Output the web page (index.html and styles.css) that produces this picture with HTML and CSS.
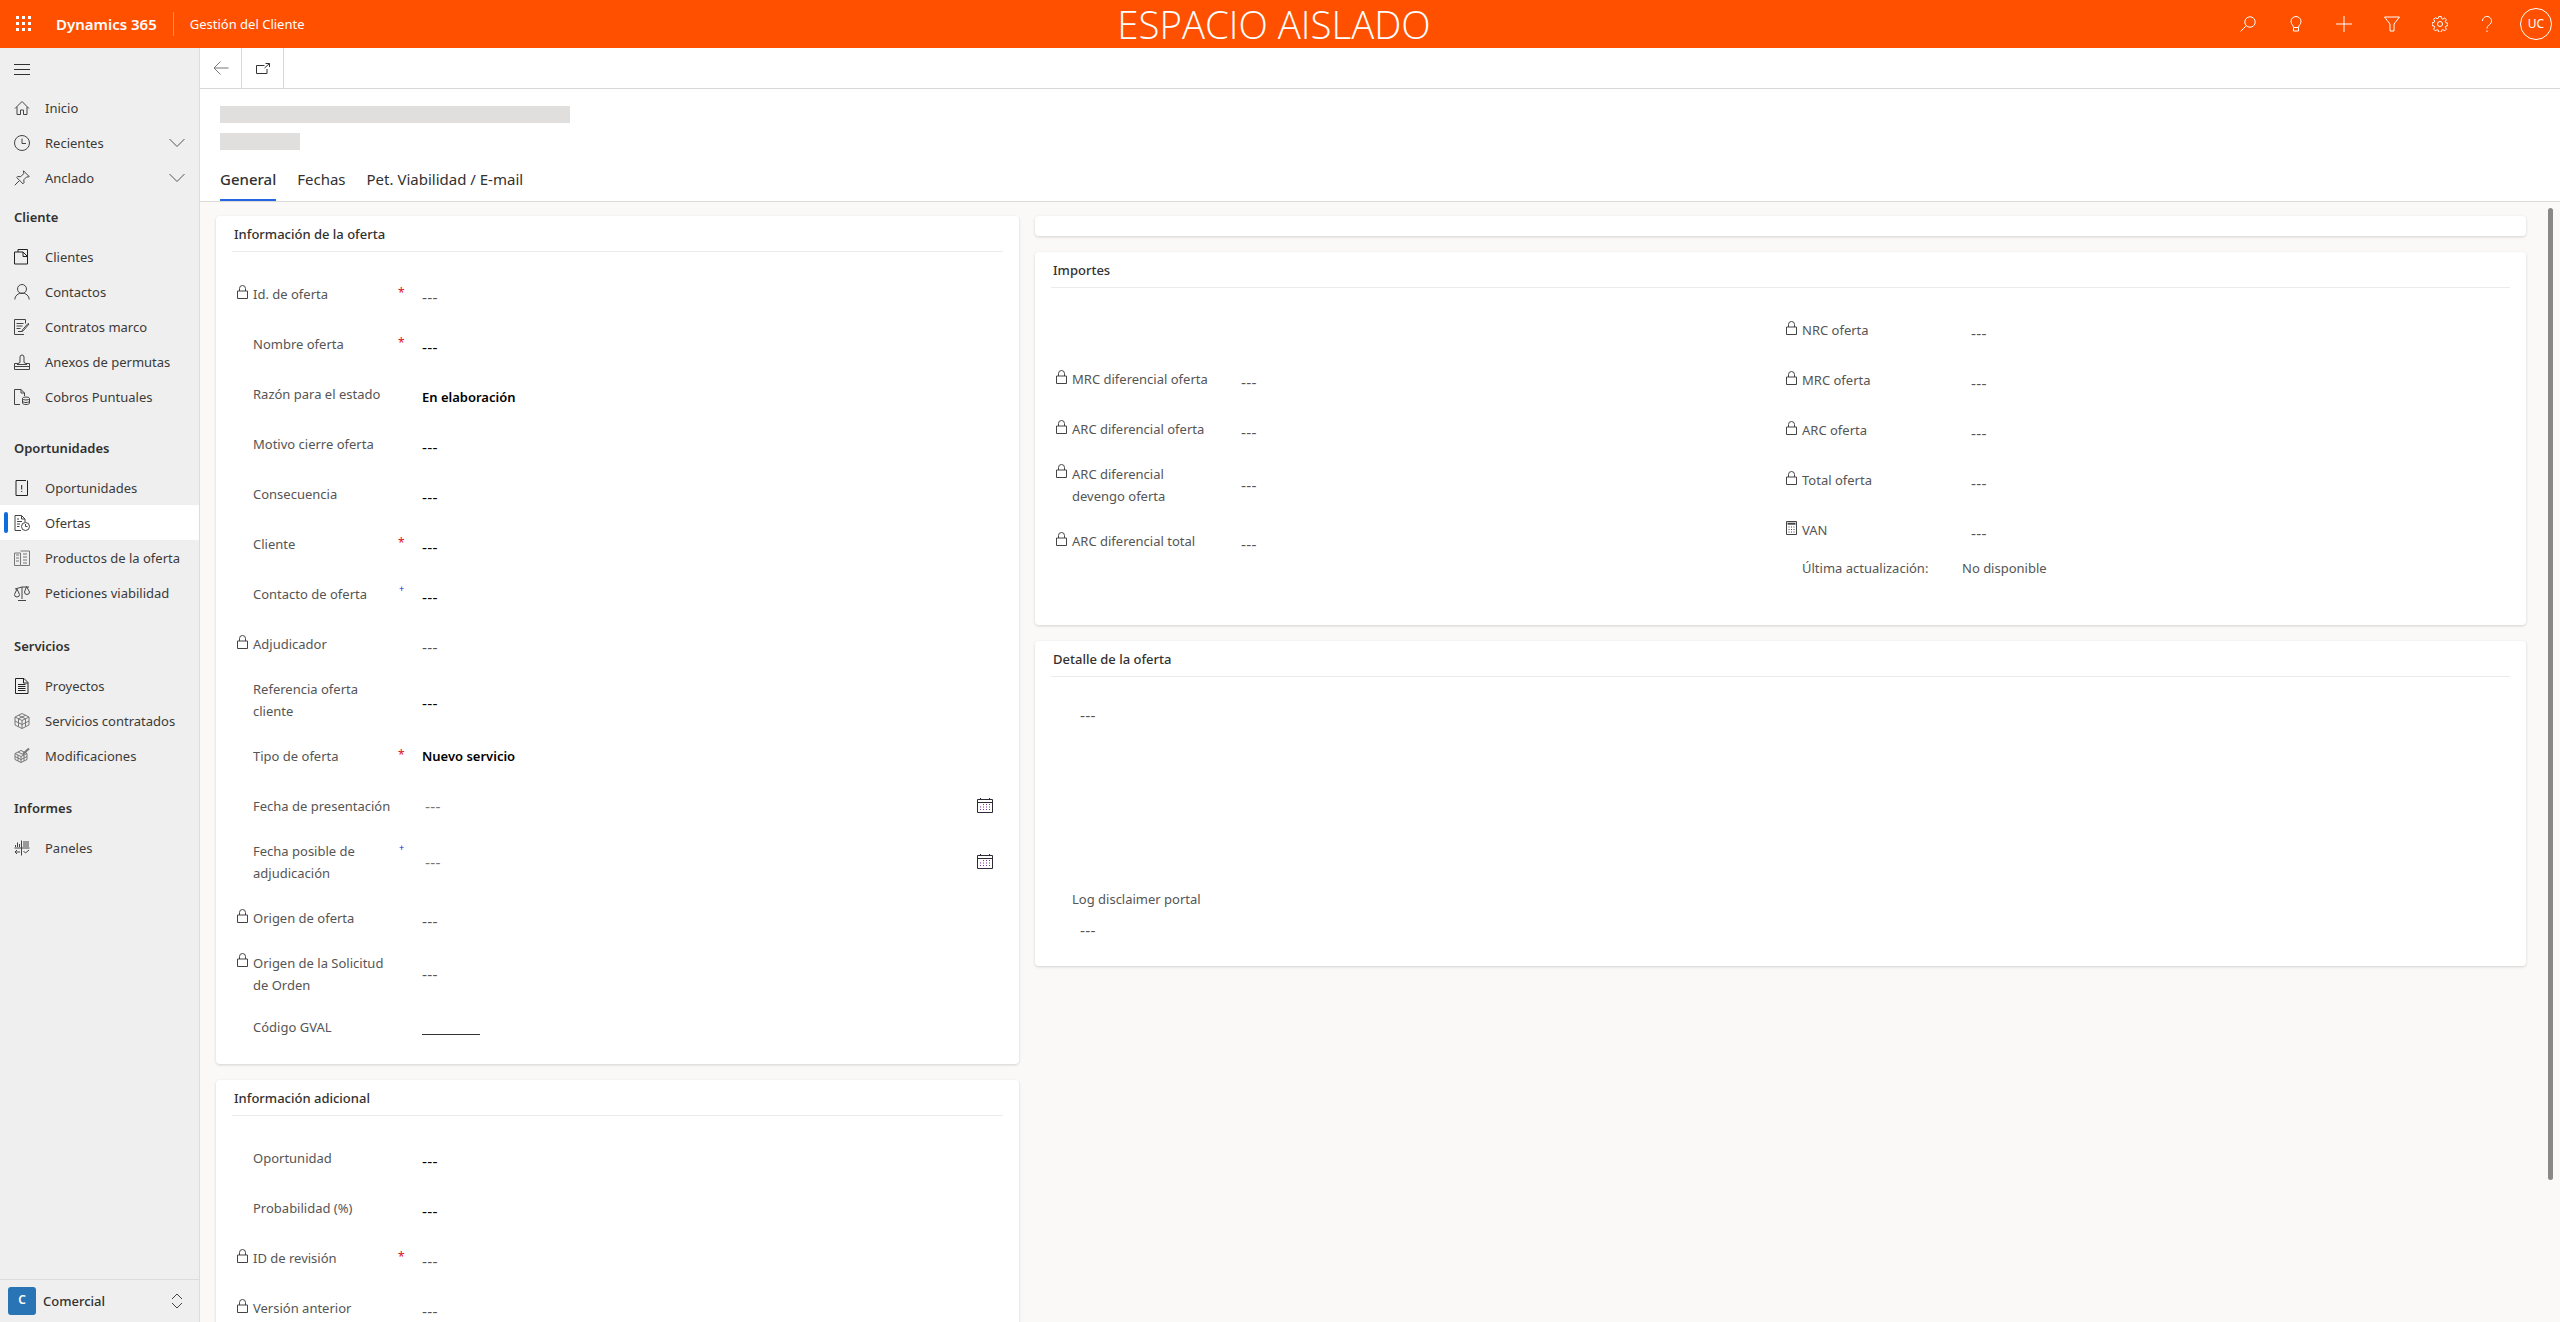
FILE: index.html
```html
<!doctype html>
<html lang="es">
	<head>
		<meta charset="utf-8">
		<title>Gestión del Cliente</title>
		<link rel="stylesheet" href="styles.css">
	</head>
	<body>
		<svg class="sprite" xmlns="http://www.w3.org/2000/svg">
			<symbol id="i-lock" viewBox="0 0 11 14"><path d="M2.5 6V3.5a3 3 0 0 1 6 0V6M.5 6h10v7.5H.5z"/></symbol>
			<symbol id="i-home" viewBox="0 0 16 16"><path d="M1 8.5 8 1.5l7 7M3 7v7.5h3.5V10h3v4.5H13V7"/></symbol>
			<symbol id="i-clock" viewBox="0 0 16 16"><circle cx="8" cy="8" r="7.5"/><path d="M8 3.5V8.5H12"/></symbol>
			<symbol id="i-pin" viewBox="0 0 16 16"><path d="M9.5 .8 15.2 6.5l-1.1.5-1.3-.2-3 3 .2 3-1 1-6.3-6.3 1-1 3 .2 3-3-.2-1.3zM5 11 .8 15.2"/></symbol>
			<symbol id="i-chev" viewBox="0 0 16 10"><path d="M.5 1 8 8.5 15.5 1"/></symbol>
			<symbol id="i-updown" viewBox="0 0 12 16"><path d="M1 6 6 1l5 5M1 10l5 5 5-5"/></symbol>
			<symbol id="i-account" viewBox="0 0 16 16"><path d="M4 3V.5h9.5V15M.5 3H9l4.5 4.5V15H.5zM9 3v4.5h4.5"/></symbol>
			<symbol id="i-person" viewBox="0 0 16 16"><circle cx="8" cy="5" r="4.5"/><path d="M.8 15.5a7.2 6.5 0 0 1 14.400 0"/></symbol>
			<symbol id="i-contract" viewBox="0 0 16 16"><path d="M10 15.5H.5V.5h11v4M2.500 4.500h7M2.500 7h6M2.500 9.500h4M4 12.500h4M15 5l-5.500 6.500-1.500 1 .5-1.700L14 4.500z"/></symbol>
			<symbol id="i-stamp" viewBox="0 0 16 16"><path d="M.5 15.500h15v-6h-3.500l-2-1V3a2 2 0 0 0-4 0v5.500l-2 1H.5zM.5 12.500h15M3 10.500h10"/></symbol>
			<symbol id="i-bill" viewBox="0 0 16 16"><path d="M6 15.500H.5V.5h6.500l3.500 3.500v3M7 .5V4h3.500"/><ellipse cx="12" cy="9.500" rx="3.500" ry="1.500"/><path d="M8.500 9.500v4.500c0 2 7 2 7 0V9.500M8.500 12c0 2 7 2 7 0"/></symbol>
			<symbol id="i-opp" viewBox="0 0 16 16"><path d="M12 .5H2v15h11.500V2.500M7.700 5v4.500M7.700 11v1M13.500 .5v4"/></symbol>
			<symbol id="i-quote" viewBox="0 0 16 16"><path d="M7 15.500H1V.5h6.500L11 4v3M7.500 .5V4H11M3 4h2M3 6.500h5M3 9h3M3 11.500h2.500"/><circle cx="11.500" cy="11.500" r="4"/><path d="M11.500 9v2.500h2"/></symbol>
			<symbol id="i-products" viewBox="0 0 16 16"><path d="M.5 3h6v12.500h-6zM6.500 1h9v14.500h-9M2 5h3M2 8h3M2 11h3M9 4h4M9 7h4M9 10h4M9 13h4"/></symbol>
			<symbol id="i-scale" viewBox="0 0 16 16"><path d="M8 2v12M4 15.500h8M1 4l7-2 7 0M3 4 .5 9.500a2.500 2.500 0 0 0 5 0zM12.500 1.500 10.500 7a2.500 2.500 0 0 0 5 0z"/></symbol>
			<symbol id="i-doc" viewBox="0 0 16 16"><path d="M1.500.5h8.500l4 4v11H1.500zM9.500.5V5H14M4 6.500h7.500M4 8.500h7.500M4 10.500h7.500M4 12.500h7.500"/></symbol>
			<symbol id="i-cube" viewBox="0 0 16 16"><path d="M8 .5 15 4v8l-7 3.500L1 12V4zM1 4l7 3.500L15 4M8 7.500v8M4.500 2.300l7 3.500M11.500 2.300l-7 3.500M1 8l7 3.500L15 8M4.500 5.800v8M11.500 5.800v8"/></symbol>
			<symbol id="i-cubeedit" viewBox="0 0 16 16"><path d="M7 2.500 13 5.500v6l-6 3-6-3v-6zM1 5.500l6 3 6-3M7 8.500v6M4 4l6 3M1 8.500l6 3 6-3M4 7v6M10 7v6"/><path class="thick" d="M9 6 15 .5"/></symbol>
			<symbol id="i-panel" viewBox="0 0 16 16"><path d="M7.500 .5v15M.5 8h15M1.500 7V5M3.500 7V2.500M5.500 7V4M9 2h6M9 4h6M9 6h6M1 12h5M1 12l2-2M1 12l2 2M9.500 11l2 2 3.500-3"/></symbol>
			<symbol id="i-calc" viewBox="0 0 11 14"><path d="M.5.5h10v13H.5zM2.500 6h1M5 6h1M7.500 6h1M2.500 8.500h1M5 8.500h1M7.500 8.500h1M2.500 11h1M5 11h1M7.500 11h1"/><path class="thick" d="M1.500 2.700h8"/></symbol>
			<symbol id="i-cal" viewBox="0 0 16 15"><path class="cal-frame" d="M.5 1.500h15v13H.5zM.5 4.500h15M3.500 0v2M12.500 0v2"/><path class="cal-dots" d="M6 6.500h1M9 6.500h1M12 6.500h1M3 9h1M6 9h1M9 9h1M12 9h1M3 11.500h1M6 11.500h1M9 11.500h1M12 11.500h1"/></symbol>
		</svg>

		<div class="app">
			<header class="topbar">
				<div class="brand">
					<svg class="waffle" viewBox="0 0 16 16"><path d="M0 0h3v3H0zM6 0h3v3H6zM12 0h3v3h-3zM0 6h3v3H0zM6 6h3v3H6zM12 6h3v3h-3zM0 12h3v3H0zM6 12h3v3H6zM12 12h3v3h-3z"/></svg>
					<span class="brand-name">Dynamics 365</span>
					<span class="brand-app">Gestión del Cliente</span>
				</div>
				<div class="sandbox">ESPACIO AISLADO</div>
				<div class="top-actions">
					<svg class="top-icon" viewBox="0 0 16 16"><circle cx="10" cy="6" r="5.2"/><path d="M6.200 9.800.6 15.400"/></svg>
					<svg class="top-icon" viewBox="0 0 16 16"><path d="M5.500 11.500C5.500 9 3 8.500 3 5.500a5 5 0 0 1 10 0c0 3-2.500 3.500-2.500 6zM5.500 11.500v3.500h5v-3.500"/></svg>
					<svg class="top-icon" viewBox="0 0 16 16"><path d="M8 0v16M0 8h16"/></svg>
					<svg class="top-icon" viewBox="0 0 16 16"><path d="M.5 1h15L10 8v7H6V8z"/></svg>
					<svg class="top-icon" viewBox="0 0 16 16"><circle cx="8" cy="8" r="2.5"/><path d="M6.800.5h2.400l.4 2 1.300.6 1.800-1.100 1.700 1.700-1.100 1.800.6 1.300 2 .4v2.400l-2 .4-.6 1.300 1.100 1.800-1.700 1.700-1.800-1.100-1.300.6-.4 2H6.800l-.4-2-1.300-.6-1.800 1.100-1.700-1.700 1.100-1.800-.6-1.300-2-.4V6.800l2-.4.6-1.300-1.100-1.800 1.700-1.700 1.800 1.100 1.300-.6z"/></svg>
					<svg class="top-icon" viewBox="0 0 16 16"><path d="M3.500 5a4.500 4.500 0 1 1 7 3.700C9 9.700 8 10.500 8 12.500M8 14.500v1.500"/></svg>
					<div class="avatar">UC</div>
				</div>
			</header>

			<div class="body-wrap">
				<nav class="sidebar">
					<div class="burger"><span></span><span></span><span></span></div>
					<div class="nav-item"><svg class="ico"><use href="#i-home"/></svg>Inicio</div>
					<div class="nav-item"><svg class="ico"><use href="#i-clock"/></svg>Recientes<svg class="chev"><use href="#i-chev"/></svg></div>
					<div class="nav-item"><svg class="ico"><use href="#i-pin"/></svg>Anclado<svg class="chev"><use href="#i-chev"/></svg></div>

					<div class="nav-title nav-title-first">Cliente</div>
					<div class="nav-item"><svg class="ico dark"><use href="#i-account"/></svg>Clientes</div>
					<div class="nav-item"><svg class="ico"><use href="#i-person"/></svg>Contactos</div>
					<div class="nav-item"><svg class="ico"><use href="#i-contract"/></svg>Contratos marco</div>
					<div class="nav-item"><svg class="ico"><use href="#i-stamp"/></svg>Anexos de permutas</div>
					<div class="nav-item"><svg class="ico"><use href="#i-bill"/></svg>Cobros Puntuales</div>

					<div class="nav-title nav-title-opp">Oportunidades</div>
					<div class="nav-item"><svg class="ico dark"><use href="#i-opp"/></svg>Oportunidades</div>
					<div class="nav-item current"><svg class="ico"><use href="#i-quote"/></svg>Ofertas</div>
					<div class="nav-item"><svg class="ico grey"><use href="#i-products"/></svg>Productos de la oferta</div>
					<div class="nav-item"><svg class="ico"><use href="#i-scale"/></svg>Peticiones viabilidad</div>

					<div class="nav-title nav-title-serv">Servicios</div>
					<div class="nav-item"><svg class="ico dark"><use href="#i-doc"/></svg>Proyectos</div>
					<div class="nav-item"><svg class="ico grey"><use href="#i-cube"/></svg>Servicios contratados</div>
					<div class="nav-item"><svg class="ico grey"><use href="#i-cubeedit"/></svg>Modificaciones</div>

					<div class="nav-title">Informes</div>
					<div class="nav-item"><svg class="ico"><use href="#i-panel"/></svg>Paneles</div>

					<div class="area">
						<div class="area-badge">C</div>
						<div class="area-name">Comercial</div>
						<svg class="updown"><use href="#i-updown"/></svg>
					</div>
				</nav>

				<main class="main">
					<div class="cmdbar">
						<div class="cmd-btn cmd-back"><svg class="cmd-ico" viewBox="0 0 16 16"><path d="M15.5 8H1M7.5 1.5 1 8l6.5 6.5"/></svg></div>
						<div class="cmd-btn cmd-open"><svg class="cmd-open-ico" viewBox="0 0 14 11"><path d="M8.5 2.500H.5v8h10.500V6M9.500.5h4V4M13.500.5 8.500 5"/></svg></div>
					</div>

					<div class="record-head">
						<div class="skeleton skeleton-title"></div>
						<div class="skeleton skeleton-sub"></div>
						<div class="tabs">
							<div class="tab active">General</div>
							<div class="tab">Fechas</div>
							<div class="tab">Pet. Viabilidad / E-mail</div>
						</div>
					</div>

					<div class="content">
						<div class="col">
							<section class="card card-oferta">
								<h2 class="card-title">Información de la oferta</h2>
								<div class="rows">
									<div class="row"><svg class="lock"><use href="#i-lock"/></svg><div class="label">Id. de oferta</div><div class="req">*</div><div class="value locked">---</div></div>
									<div class="row"><div class="label">Nombre oferta</div><div class="req">*</div><div class="value">---</div></div>
									<div class="row"><div class="label">Razón para el estado</div><div class="value strong">En elaboración</div></div>
									<div class="row"><div class="label">Motivo cierre oferta</div><div class="value">---</div></div>
									<div class="row"><div class="label">Consecuencia</div><div class="value">---</div></div>
									<div class="row"><div class="label">Cliente</div><div class="req">*</div><div class="value">---</div></div>
									<div class="row"><div class="label">Contacto de oferta</div><div class="req rec">+</div><div class="value">---</div></div>
									<div class="row"><svg class="lock"><use href="#i-lock"/></svg><div class="label">Adjudicador</div><div class="value locked">---</div></div>
									<div class="row tall"><div class="label">Referencia oferta cliente</div><div class="value">---</div></div>
									<div class="row"><div class="label">Tipo de oferta</div><div class="req">*</div><div class="value strong even">Nuevo servicio</div></div>
									<div class="row"><div class="label">Fecha de presentación</div><div class="value date even"><span>---</span><svg class="cal"><use href="#i-cal"/></svg></div></div>
									<div class="row tall"><div class="label">Fecha posible de adjudicación</div><div class="req rec rec-top">+</div><div class="value date even"><span>---</span><svg class="cal"><use href="#i-cal"/></svg></div></div>
									<div class="row"><svg class="lock"><use href="#i-lock"/></svg><div class="label">Origen de oferta</div><div class="value locked">---</div></div>
									<div class="row tall"><svg class="lock lock-top"><use href="#i-lock"/></svg><div class="label">Origen de la Solicitud de Orden</div><div class="value locked even">---</div></div>
									<div class="row short"><div class="label">Código GVAL</div><div class="value"><div class="blank"></div></div></div>
								</div>
							</section>

							<section class="card">
								<h2 class="card-title">Información adicional</h2>
								<div class="rows">
									<div class="row"><div class="label">Oportunidad</div><div class="value">---</div></div>
									<div class="row"><div class="label">Probabilidad (%)</div><div class="value">---</div></div>
									<div class="row"><svg class="lock"><use href="#i-lock"/></svg><div class="label">ID de revisión</div><div class="req">*</div><div class="value locked">---</div></div>
									<div class="row"><svg class="lock"><use href="#i-lock"/></svg><div class="label">Versión anterior</div><div class="value locked">---</div></div>
								</div>
							</section>
						</div>

						<div class="col">
							<section class="card card-stub"></section>

							<section class="card card-importes">
								<h2 class="card-title">Importes</h2>
								<div class="importes">
									<div class="importes-left">
										<div class="row"><svg class="lock"><use href="#i-lock"/></svg><div class="label">MRC diferencial oferta</div><div class="value locked">---</div></div>
										<div class="row"><svg class="lock"><use href="#i-lock"/></svg><div class="label">ARC diferencial oferta</div><div class="value locked">---</div></div>
										<div class="row tall"><svg class="lock lock-top"><use href="#i-lock"/></svg><div class="label">ARC diferencial devengo oferta</div><div class="value locked even">---</div></div>
										<div class="row"><svg class="lock"><use href="#i-lock"/></svg><div class="label">ARC diferencial total</div><div class="value locked">---</div></div>
									</div>
									<div class="importes-right">
										<div class="row"><svg class="lock"><use href="#i-lock"/></svg><div class="label">NRC oferta</div><div class="value locked">---</div></div>
										<div class="row"><svg class="lock"><use href="#i-lock"/></svg><div class="label">MRC oferta</div><div class="value locked">---</div></div>
										<div class="row"><svg class="lock"><use href="#i-lock"/></svg><div class="label">ARC oferta</div><div class="value locked">---</div></div>
										<div class="row"><svg class="lock"><use href="#i-lock"/></svg><div class="label">Total oferta</div><div class="value locked">---</div></div>
										<div class="row"><svg class="lock"><use href="#i-calc"/></svg><div class="label">VAN</div><div class="value locked">---</div></div>
										<div class="updated"><span class="updated-label">Última actualización:</span><span>No disponible</span></div>
									</div>
								</div>
							</section>

							<section class="card card-detalle">
								<h2 class="card-title">Detalle de la oferta</h2>
								<div class="detail-value detail-first">---</div>
								<div class="detail-label">Log disclaimer portal</div>
								<div class="detail-value">---</div>
							</section>
						</div>

						<div class="scroll-thumb"></div>
					</div>
				</main>
			</div>
		</div>
	</body>
</html>
```

FILE: styles.css
```css
* {
	margin: 0;
	padding: 0;
	box-sizing: border-box;
}
html, body {
	height: 100%;
	overflow: hidden;
}
body {
	font-family: "Noto Sans", "Open Sans", sans-serif;
	font-size: 13px;
	color: #323130;
	background: #faf9f8;
}
svg {
	fill: none;
	stroke: currentColor;
	stroke-width: 1;
	display: block;
	flex: none;
}
.sprite {
	display: none;
}
.thick {
	stroke-width: 2;
}
.app {
	display: flex;
	flex-direction: column;
	height: 100%;
}

/* top bar */
.topbar {
	display: grid;
	grid-template-columns: 1fr auto 1fr;
	align-items: center;
	height: 48px;
	flex: none;
	background: #ff5000;
	color: #fff;
}
.brand {
	display: flex;
	align-items: center;
}
.waffle {
	width: 16px;
	height: 16px;
	margin-left: 16px;
	fill: #fff;
	stroke: none;
}
.brand-name {
	margin-left: 24px;
	padding-right: 16px;
	font-size: 15px;
	font-weight: 600;
	line-height: 24px;
	border-right: 1px solid rgba(255,255,255,.35);
}
.brand-app {
	margin-left: 16px;
	font-size: 13px;
}
.sandbox {
	margin-right: 12px;
	font-family: "Open Sans", sans-serif;
	font-size: 38.4px;
	font-weight: 300;
	line-height: 48px;
	white-space: nowrap;
}
.top-actions {
	display: flex;
	justify-content: flex-end;
	align-items: center;
	padding-right: 8px;
}
.top-icon {
	width: 16px;
	height: 16px;
	margin-right: 32px;
}
.top-icon:nth-child(5) {
	margin-right: 31px;
}
.top-icon:nth-child(6) {
	margin-right: 25px;
}
.avatar {
	width: 32px;
	height: 32px;
	border: 1px solid #fff;
	border-radius: 50%;
	font-size: 12px;
	line-height: 30px;
	text-align: center;
}

/* left nav */
.body-wrap {
	display: flex;
	flex: 1;
	min-height: 0;
}
.sidebar {
	display: flex;
	flex-direction: column;
	width: 200px;
	flex: none;
	background: #efefef;
	border-right: 1px solid #dcdcdc;
}
.burger {
	display: flex;
	flex-direction: column;
	justify-content: center;
	gap: 4px;
	height: 42px;
	padding-left: 14px;
	flex: none;
}
.burger span {
	width: 16px;
	height: 1px;
	background: #323130;
}
.nav-item {
	display: flex;
	align-items: center;
	height: 35px;
	flex: none;
	color: #3b3a39;
}
.ico {
	width: 16px;
	height: 16px;
	margin: 0 15px 0 14px;
	color: #444;
}
.ico.dark {
	color: #222;
}
.ico.grey {
	color: #777;
}
.chev {
	width: 16px;
	height: 10px;
	margin-left: auto;
	margin-right: 14px;
	color: #555;
}
.nav-item.current {
	position: relative;
	background: #fff;
}
.nav-item.current::before {
	content: "";
	position: absolute;
	left: 4px;
	top: 7px;
	width: 4px;
	height: 21px;
	border-radius: 2px;
	background: #0f6cdc;
}
.nav-title {
	height: 44px;
	margin-top: 13px;
	padding-left: 14px;
	flex: none;
	font-weight: 600;
	line-height: 44px;
	color: #323130;
}
.nav-title-first {
	margin-top: 0;
}
.nav-title-opp {
	margin-top: 12px;
}
.nav-title-serv {
	margin-top: 14px;
}
.area {
	display: flex;
	align-items: center;
	height: 43px;
	margin-top: auto;
	padding-left: 8px;
	flex: none;
	border-top: 1px solid #dcdcdc;
}
.area-badge {
	width: 28px;
	height: 28px;
	border-radius: 3px;
	background: #2874b4;
	color: #fff;
	font-size: 12px;
	font-weight: 600;
	line-height: 26px;
	text-align: center;
}
.area-name {
	margin-left: 7px;
	font-weight: 500;
}
.updown {
	width: 12px;
	height: 16px;
	margin-left: auto;
	margin-right: 16px;
	color: #444;
}

/* main */
.main {
	display: flex;
	flex-direction: column;
	flex: 1;
	min-width: 0;
}
.cmdbar {
	display: flex;
	height: 41px;
	flex: none;
	background: #fff;
	border-bottom: 1px solid #d8d8d8;
}
.cmd-btn {
	display: flex;
	align-items: center;
	justify-content: center;
	width: 42px;
	border-right: 1px solid #d8d8d8;
}
.cmd-back {
	color: #777;
}
.cmd-open {
	color: #333;
}
.cmd-ico {
	width: 16px;
	height: 16px;
}
.cmd-open-ico {
	width: 14px;
	height: 11px;
}
.record-head {
	height: 113px;
	flex: none;
	padding: 17px 0 0 20px;
	background: #fff;
	border-bottom: 1px solid #dcdad8;
}
.skeleton {
	background: #e1dfdd;
}
.skeleton-title {
	width: 350px;
	height: 17px;
}
.skeleton-sub {
	width: 80px;
	height: 17px;
	margin-top: 10px;
}
.tabs {
	display: flex;
	gap: 21px;
	margin-top: 11px;
}
.tab {
	height: 40px;
	font-size: 15px;
	line-height: 36px;
	color: #323130;
}
.tab.active {
	font-weight: 500;
	border-bottom: 2px solid #2266e3;
}

/* cards */
.content {
	position: relative;
	display: grid;
	grid-template-columns: 803px 1491px;
	gap: 16px;
	flex: 1;
	min-height: 0;
	padding: 14px 0 0 16px;
	overflow: hidden;
	background: #faf9f8;
}
.col {
	display: flex;
	flex-direction: column;
	gap: 16px;
}
.card {
	flex: none;
	padding: 0 16px;
	border-radius: 4px;
	background: #fff;
	box-shadow: 0 1px 3px rgba(0,0,0,.16);
}
.card-title {
	height: 36px;
	padding-left: 2px;
	font-size: 13px;
	font-weight: 500;
	line-height: 36px;
	color: #323130;
	border-bottom: 1px solid #edebe9;
}
.card-oferta {
	height: 848px;
}
.card-stub {
	height: 20px;
}
.card-importes {
	height: 373px;
}
.card-detalle {
	height: 325px;
}
.rows {
	padding-top: 17px;
}
.row {
	display: grid;
	grid-template-columns: 5px 16px 147px 22px 1fr;
	align-items: center;
	height: 50px;
}
.row.tall {
	height: 62px;
}
.row.short {
	height: 44px;
}
.lock {
	grid-column: 2;
	width: 11px;
	height: 14px;
	margin-top: -4px;
	color: #444;
}
.lock-top {
	align-self: start;
	margin-top: 10px;
}
.label {
	grid-column: 3;
	line-height: 22px;
	color: #555;
}
.req {
	grid-column: 4;
	margin-top: -2px;
	margin-left: -2px;
	font-size: 12px;
	line-height: 14px;
	color: #e00b1c;
}
.req.rec {
	margin-top: -10px;
	margin-left: -1px;
	font-size: 9px;
	color: #1010e0;
}
.req.rec-top {
	margin-top: -28px;
}
/* the dashes of an empty value read wider in Liberation than in Noto */
.value {
	grid-column: 5;
	padding-top: 6px;
	font-family: "Liberation Sans", sans-serif;
	font-size: 15px;
	letter-spacing: .3px;
	color: #000;
}
.value.even {
	padding-top: 0;
}
.value.locked {
	color: #555;
}
.value.strong {
	font-family: "Noto Sans", sans-serif;
	font-size: 13px;
	font-weight: 600;
	letter-spacing: 0;
}
.value.date {
	display: flex;
	align-items: center;
	justify-content: space-between;
	padding-left: 3px;
	padding-right: 10px;
	color: #777;
}
.cal {
	width: 16px;
	height: 15px;
	margin-top: -2px;
}
.cal-frame {
	stroke: #2f2b35;
}
.cal-dots {
	stroke: #8a2da5;
}
.blank {
	width: 58px;
	height: 9px;
	border-bottom: 1px solid #333;
}
.importes {
	display: grid;
	grid-template-columns: 730px 1fr;
}
.importes-left {
	padding-top: 66px;
}
.importes-right {
	padding-top: 17px;
}
.updated {
	display: flex;
	height: 25px;
	padding-left: 21px;
	align-items: center;
	color: #555;
}
.updated-label {
	width: 160px;
}
.detail-value {
	padding-left: 29px;
	font-family: "Liberation Sans", sans-serif;
	font-size: 15px;
	letter-spacing: .3px;
	line-height: 20px;
	color: #555;
}
.detail-first {
	margin-top: 29px;
}
.detail-label {
	margin-top: 163px;
	padding-left: 21px;
	line-height: 20px;
	color: #555;
}
.detail-label + .detail-value {
	margin-top: 12px;
}
.scroll-thumb {
	position: absolute;
	left: 2348px;
	top: 6px;
	width: 5px;
	height: 972px;
	border-radius: 3px;
	background: #8a8886;
}
```
